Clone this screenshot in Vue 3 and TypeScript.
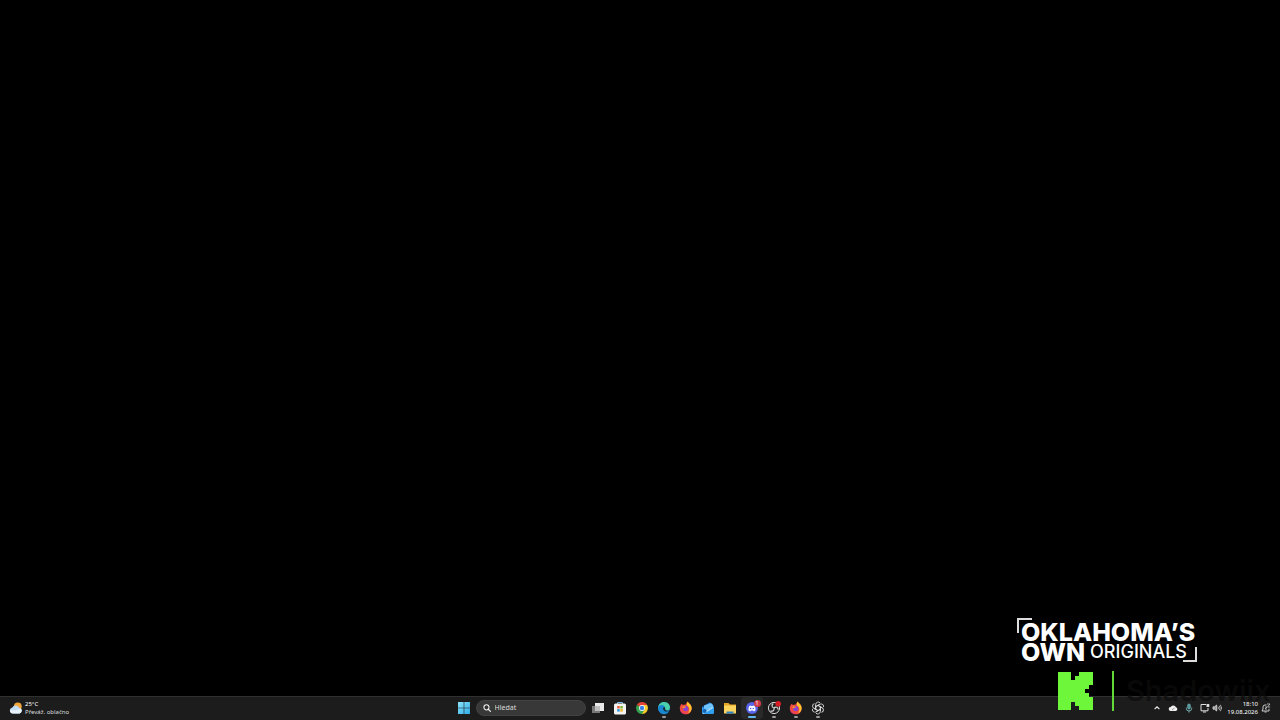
<script setup lang="ts">
interface App {
  id: string
  label: string
  running?: boolean
  active?: boolean
}

const apps: App[] = [
  { id: 'tasks', label: 'Zobrazení úkolů' },
  { id: 'store', label: 'Microsoft Store' },
  { id: 'chrome', label: 'Google Chrome' },
  { id: 'edge', label: 'Microsoft Edge', running: true },
  { id: 'firefox', label: 'Firefox' },
  { id: 'mail', label: 'Outlook' },
  { id: 'files', label: 'Průzkumník souborů' },
  { id: 'discord', label: 'Discord', running: true, active: true },
  { id: 'obs', label: 'OBS Studio', running: true },
  { id: 'firefox', label: 'Firefox', running: true },
  { id: 'gpt', label: 'ChatGPT', running: true },
]
const petals = [0, 60, 120, 180, 240, 300]
</script>

<template>
  <div class="desktop">
    <main class="wallpaper"></main>

    <footer class="taskbar">
      <button class="weather" aria-label="Počasí">
        <svg class="weather-icon" viewBox="0 0 14 14" aria-hidden="true">
          <circle cx="8.8" cy="5.4" r="3.9" fill="#f2a63c" />
          <path d="M3.6 12.4a3 3 0 0 1-.3-5.9 3.8 3.8 0 0 1 6.900.3 2.900 2.900 0 0 1 .3 5.600z" fill="#c3dcf6" />
          <path d="M3.600 12.400a2.800 2.800 0 0 1-2.500-3.800c3 1.500 7 .5 10.900-1.100a2.900 2.900 0 0 1-1.500 4.900z" fill="#e6f1fc" />
        </svg>
        <span class="weather-text">
          <span>25°C</span>
          <span class="condition">Převáž. oblačno</span>
        </span>
      </button>

      <nav class="launcher" aria-label="Hlavní panel">
        <button class="app start" aria-label="Start">
          <svg class="icon" viewBox="0 0 14 14" aria-hidden="true">
            <defs>
              <linearGradient id="win" x1="0" y1="0" x2="1" y2="1">
                <stop offset="0" stop-color="#8be6fb" /><stop offset="1" stop-color="#2fa9e6" />
              </linearGradient>
            </defs>
            <path d="M1 1h5.700v5.700H1zM7.300 1H13v5.700H7.300zM1 7.300h5.700V13H1zM7.300 7.300H13V13H7.300z" fill="url(#win)" />
          </svg>
        </button>
        <label class="search">
          <svg class="search-icon" viewBox="0 0 10 10" aria-hidden="true">
            <circle cx="4.300" cy="4.200" r="3.200" fill="#333" stroke="#eee" stroke-width="1.300" />
            <path d="M6.600 6.600 9.300 9.300" stroke="#eee" stroke-width="1.500" stroke-linecap="round" />
          </svg>
          <input type="text" placeholder="Hledat" aria-label="Hledat" />
        </label>
        <button
          v-for="(app, i) in apps"
          :key="i"
          class="app"
          :class="{ running: app.running, active: app.active }"
          :aria-label="app.label"
        >
          <svg class="icon" viewBox="0 0 14 14" aria-hidden="true">
            <g v-if="app.id === 'tasks'">
              <path d="M1 5h8v7H1z" fill="#777" />
              <path d="M4 2h9v8H4z" fill="#e9e9e9" />
              <path d="M4 5h5v5H4z" fill="#bcbcbc" />
            </g>
            <g v-else-if="app.id === 'store'">
              <path d="M4.500 3V1.500h5V3" fill="none" stroke="#7db8e0" />
              <rect x="1" y="2.500" width="12" height="11" rx="1.500" fill="#f3f3f1" />
              <path d="M4.200 5h2.500v2.500H4.200z" fill="#e8593b" />
              <path d="M7.300 5h2.500v2.500H7.300z" fill="#7fb82e" />
              <path d="M4.200 8.100h2.500v2.500H4.200z" fill="#2899dc" />
              <path d="M7.300 8.100h2.500v2.500H7.300z" fill="#eeb524" />
            </g>
            <g v-else-if="app.id === 'chrome'">
              <path d="M7 7 1.800 4a6 6 0 0 1 10.400 0z" fill="#e44234" />
              <path d="M7 7V4h5.200A6 6 0 0 1 7 13z" fill="#f8ca2b" />
              <path d="M7 7 9.600 8.500 7 13A6 6 0 0 1 1.800 4z" fill="#35a350" />
              <circle cx="7" cy="7" r="2.900" fill="#fff" />
              <circle cx="7" cy="7" r="2.200" fill="#3c80e8" />
            </g>
            <g v-else-if="app.id === 'edge'">
              <circle cx="7" cy="7" r="6" fill="#1689d0" />
              <path d="M1.200 6.200C2 2.500 4.500 1 7.200 1 11 1 13 3.800 13 6.500c0 2-1.600 3-3.300 3-1.400 0-2.200-.7-1.700-1.500C9 5.500 5.500 2.800 1.200 6.200z" fill="#49cfa9" />
              <path d="M1.200 6.200C2.500 3.700 5 3.500 6.800 4.400 5 5.500 4 8 5.500 10.500c1.500 2.200 4.500 2 6.500.2C9.500 14.500 3 14 1.300 9z" fill="#1b86d2" />
              <path d="M6.900 6c-1.300 1-1 3.400 1 4.200 1.600.6 3.300.2 4.400-.5-1 .1-4.200-.1-4.300-1.700.4-.8.100-1.700-1.100-2z" fill="#17283b" />
            </g>
            <g v-else-if="app.id === 'firefox'">
              <path d="M1.200 5 2.500 2.700 4 4C5 3.500 7 3.500 7.200 3.200 7.200 2 8 1.200 9 .5c0 1.500 1.800 2.200 2.700 3.500C14 8 12 13.300 7 13.300 2.500 13.300-.3 9 1.200 5z" fill="#f04b3e" />
              <path d="M9 .5c0 1.500 1.800 2.200 2.700 3.500 2 3.500.5 7-2.700 8.600 2-3 1.500-5.600.2-7C7.500 4.200 7 2 9 .5z" fill="#ffc52c" />
              <path d="M1.100 7c.6 4 3.400 5.500 6 5.200-3 1.800-6.500-.8-6-5.200z" fill="#e53183" />
              <circle cx="6.700" cy="7.600" r="2.600" fill="#8a42d3" />
              <path d="M3.300 6C4.600 4.800 6.300 5.500 7 6.300c-1.200 0-1.600.8-2.300 1.200z" fill="#ff962c" />
            </g>
            <g v-else-if="app.id === 'mail'">
              <path d="M1 6 8.500 1.200 13 5v7.500H1z" fill="#1666bd" />
              <path d="M3 4.500 10 2l2 2v4L7 10 3 8z" fill="#6fc3fb" />
              <path d="m1 6 6 4 6-4.500v6q0 1.500-1.500 1.500h-9Q1 13 1 11.500z" fill="#319ff0" />
              <path d="m2 12.500 10-6" stroke="#a9e0ff" stroke-width="1.200" />
              <circle cx="3.500" cy="10" r="2" fill="#1764b5" />
            </g>
            <g v-else-if="app.id === 'files'">
              <path d="M1 2h4.500L7 3.500h6V12H1z" fill="#e3a526" />
              <path d="M1 4.500h12v8H1z" fill="#fbd45e" />
              <path d="M3.500 10.500h7v2h-7z" fill="#2d83ca" />
            </g>
            <g v-else-if="app.id === 'discord'">
              <circle cx="7" cy="7" r="6" fill="#5663e8" />
              <path d="M3.600 9.600c-.4-2 .1-3.500.8-4.700l1.500-.5.500.7h1.200l.5-.7 1.500.5c.7 1.200 1.200 2.700.8 4.700l-1.600.8-.6-.9H5.800l-.6.900z" fill="#fff" />
              <circle cx="5.700" cy="7.500" r=".8" fill="#5663e8" />
              <circle cx="8.300" cy="7.500" r=".8" fill="#5663e8" />
            </g>
            <g v-else-if="app.id === 'obs'">
              <circle cx="7" cy="7" r="5.600" fill="#202020" stroke="#d4d4d4" stroke-width="1" />
              <path v-for="a in [0, 120, 240]" :key="a" d="M7 7C4.500 6.300 4.500 3.800 6.300 2.500" fill="none" stroke="#d4d4d4" stroke-width="1.200" :transform="`rotate(${a} 7 7)`" />
              <circle cx="11.200" cy="2.800" r="2.800" fill="#d91c25" />
            </g>
            <g v-else fill="none" stroke="#ddd" stroke-width=".9">
              <path v-for="a in petals" :key="a" d="M4.700 5.700V3.400A2.500 2.500 0 0 1 9 1.800M4.700 5.700 7 4.400l3.700 2.100" :transform="`rotate(${a} 7 7)`" />
            </g>
          </svg>
          <span v-if="app.active" class="badge">1</span>
        </button>
      </nav>

      <div class="tray">
        <button class="tray-button" aria-label="Skryté ikony">
          <svg viewBox="0 0 10 10"><path d="m2.600 6.200 2.400-2.400 2.400 2.400" fill="none" stroke="#eee" stroke-width="1.100" /></svg>
        </button>
        <button class="tray-button" aria-label="OneDrive">
          <svg viewBox="0 0 10 10"><path d="M2.800 8a2 2 0 0 1-.2-4A3 3 0 0 1 8 4.200 2 2 0 0 1 8 8z" fill="#eee" /><path d="m4 7 2.500-2" stroke="#777" stroke-width=".7" /></svg>
        </button>
        <button class="tray-button" aria-label="Mikrofon">
          <svg viewBox="0 0 10 10" fill="none" stroke="#79b9bc"><rect x="3.700" y="1" width="2.600" height="5" rx="1.300" fill="#4e9498" stroke-width=".7" /><path d="M2.300 4.500v.8a2.700 2.700 0 0 0 5.400 0v-.8M5 8v1.600" stroke-width=".9" /></svg>
        </button>
        <button class="tray-button quick" aria-label="Síť a hlasitost">
          <svg viewBox="0 0 10 10"><path d="M6 1.500H1v6.300h7V5M3 9h3" fill="none" stroke="#ddd" /><path d="M6.500 1h2.800v3H6.500z" fill="#ddd" /></svg>
          <svg viewBox="0 0 10 10"><path d="M1 3.800h1.500L4.700 2v6L2.500 6.200H1z" fill="#999" stroke="#ddd" stroke-width=".8" /><path d="M6 3.800q1 1.200 0 2.400M7.200 2.800q2 2.200 0 4.400M8.300 1.800q2.700 3.200 0 6.400" fill="none" stroke="#ccc" stroke-width=".8" /></svg>
        </button>
        <button class="clock">
          <time>18:10</time>
          <time>19.08.2026</time>
        </button>
        <button class="tray-button bell" aria-label="Oznámení">
          <svg viewBox="0 0 10 10"><path d="M5.500 2H4Q2 2 2 4v2L1 8h7V5.800M3.500 9h2" fill="none" stroke="#ddd" stroke-width=".9" /><path d="M6 1h3L6.500 4h2.700M4 4h2L4 6h2" fill="none" stroke="#ddd" stroke-width=".7" /></svg>
        </button>
      </div>
    </footer>

    <div class="originals">
      <svg class="corner top" viewBox="0 0 15 15" aria-hidden="true"><path d="M1 15V1h14" /></svg>
      <div class="line-one">OKLAHOMA’S</div>
      <div class="line-two"><span class="own">OWN</span><span>ORIGINALS</span></div>
      <svg class="corner bottom" viewBox="0 0 15 15" aria-hidden="true"><path d="M14 0v14H1" /></svg>
    </div>

    <div class="channel">
      <svg class="kick" viewBox="0 0 35 38" aria-hidden="true">
        <path d="M0 0h13v8h4V4h4V0h14v13h-4v4h-4v4h4v4h4v13H21v-4h-4v-4h-4v8H0z" fill="#6df63a" />
      </svg>
      <span class="divider"></span>
      <span class="name">Shadowiix</span>
    </div>
  </div>
</template>

<style>
body {
  background: #000;
}
</style>

<style scoped>
.desktop {
  position: relative;
  display: flex;
  flex-direction: column;
  min-height: 100vh;
  overflow: hidden;
  background: #000;
  color: #fff;
  font-family: "Noto Sans", "Open Sans", sans-serif;
}
.wallpaper {
  flex: 1;
}
button {
  border: 0;
  padding: 0;
  background: none;
  color: inherit;
  font: inherit;
}
svg {
  display: block;
}
.taskbar {
  position: relative;
  z-index: 1;
  display: grid;
  grid-template-columns: 1fr auto 1fr;
  align-items: center;
  height: 24px;
  box-sizing: border-box;
  padding-bottom: 1px;
  border-top: 1px solid #303030;
  background: #1c1c1c;
}
.weather {
  display: flex;
  align-items: center;
  gap: 2px;
  padding-left: 9px;
  text-align: left;
}
.weather-icon {
  width: 14px;
  height: 14px;
}
.weather-text {
  display: flex;
  flex-direction: column;
  font-size: 6px;
  line-height: 8px;
}
.condition {
  color: #ddd;
}
.launcher {
  display: flex;
  align-items: center;
}
.app {
  position: relative;
  display: grid;
  place-items: center;
  width: 22px;
  height: 22px;
  border-radius: 3px;
}
.start {
  width: 24px;
}
.icon {
  width: 14px;
  height: 14px;
}
.search {
  display: flex;
  align-items: center;
  gap: 4px;
  width: 110px;
  height: 16px;
  box-sizing: border-box;
  padding: 0 6px;
  margin-right: 1px;
  border: 1px solid #424242;
  border-radius: 8px;
  background: #383838;
}
.search-icon {
  flex: none;
  width: 8px;
  height: 8px;
}
.search input {
  min-width: 0;
  flex: 1;
  border: 0;
  padding: 0;
  background: none;
  color: #ddd;
  font: 7px/12px "Noto Sans", "Open Sans", sans-serif;
}
.search input::placeholder {
  color: #ddd;
  opacity: 1;
}
.active {
  background: #292929;
}
.running::after {
  position: absolute;
  bottom: 1px;
  left: 50%;
  width: 4px;
  height: 2px;
  border-radius: 1px;
  background: #999;
  content: "";
  transform: translateX(-50%);
}
.active::after {
  width: 8px;
  background: #62b7ef;
}
.badge {
  position: absolute;
  top: 3px;
  right: 2px;
  width: 7px;
  height: 7px;
  border-radius: 50%;
  background: #d23b48;
  color: #fff;
  font-size: 6px;
  line-height: 7px;
  text-align: center;
}
.tray {
  display: flex;
  align-items: center;
  justify-content: flex-end;
  padding-right: 9px;
}
.tray-button {
  display: flex;
  gap: 2px;
  padding: 0 3px;
}
.tray-button svg {
  width: 10px;
  height: 10px;
}
.clock {
  display: flex;
  flex-direction: column;
  align-items: flex-end;
  width: 33px;
  font-size: 6px;
  line-height: 8px;
  white-space: nowrap;
}
.bell {
  padding-right: 0;
}
.originals {
  position: absolute;
  right: 83px;
  bottom: 58px;
  width: 180px;
  box-sizing: border-box;
  padding: 4px 4px 0;
  color: #fff;
  font-family: Inter, "Open Sans", sans-serif;
}
.line-one {
  font-size: 25px;
  font-weight: 800;
  line-height: 20px;
}
.line-two {
  display: flex;
  align-items: center;
  gap: 5px;
  font-size: 18px;
  font-weight: 500;
  line-height: 20px;
}
.own {
  font-size: 25px;
  font-weight: 800;
}
.corner {
  position: absolute;
  width: 15px;
  height: 15px;
  fill: none;
  stroke: #ddd;
  stroke-width: 2;
}
.top {
  top: 0;
  left: 0;
}
.bottom {
  right: 0;
  bottom: 0;
}
.channel {
  position: absolute;
  z-index: 2;
  right: 9px;
  bottom: 9px;
  display: flex;
  align-items: center;
  width: 213px;
  pointer-events: none;
}
.kick {
  flex: none;
  width: 35px;
  height: 38px;
}
.divider {
  flex: none;
  width: 2px;
  height: 40px;
  margin: 0 12px 0 19px;
  background: #62d936;
}
.name {
  color: rgba(12, 12, 12, 0.7);
  font-family: Inter, "Open Sans", sans-serif;
  font-size: 29px;
  font-weight: 600;
  line-height: 38px;
}
</style>
